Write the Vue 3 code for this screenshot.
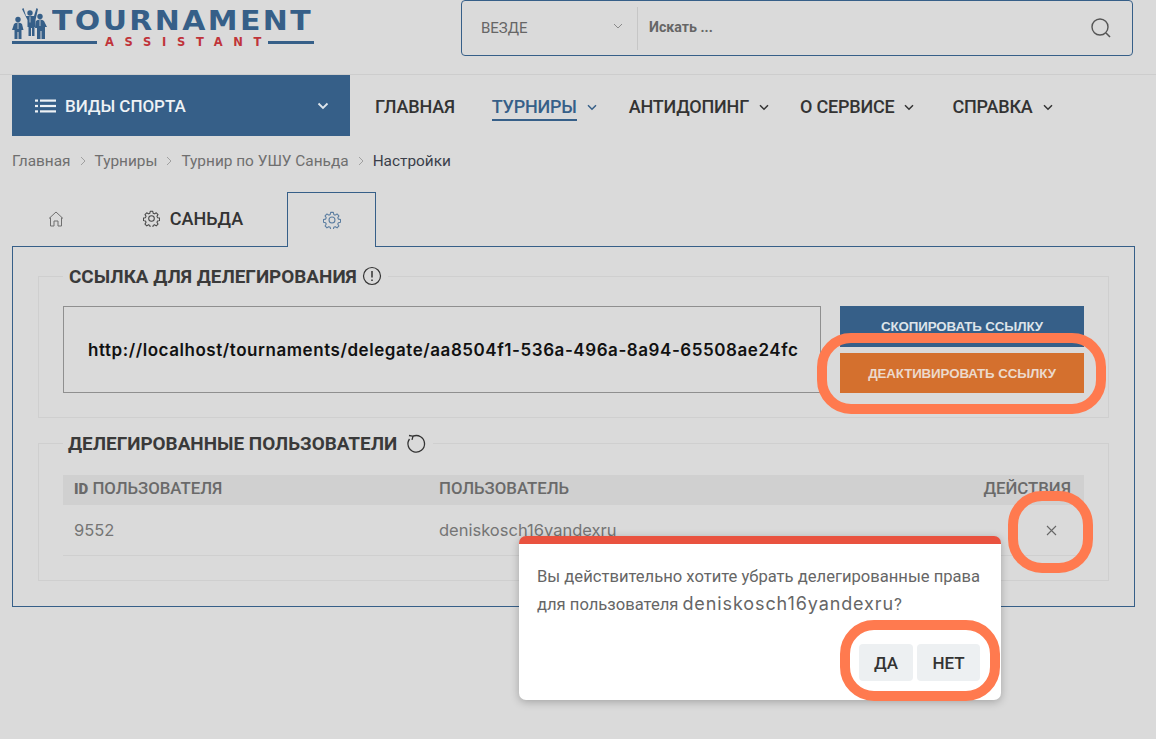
<script setup>
const crumbs = ['Главная', 'Турниры', 'Турнир по УШУ Саньда']
const navItems = [
  { label: 'ГЛАВНАЯ', gap: 37 },
  { label: 'ТУРНИРЫ', caret: true, active: true, gap: 32 },
  { label: 'АНТИДОПИНГ', caret: true, gap: 31 },
  { label: 'О СЕРВИСЕ', caret: true, gap: 38 },
  { label: 'СПРАВКА', caret: true, gap: 0 }
]
const gearPath = 'M10 6.7a3.3 3.3 0 1 0 0 6.6 3.3 3.3 0 0 0 0-6.6zM8.5 1.5h3l.5 2.4 1.5.7 2.1-1.3 2.1 2.1-1.3 2.1.7 1.5 2.4.5v3l-2.4.5-.7 1.5 1.3 2.1-2.1 2.1-2.1-1.3-1.5.7-.5 2.4h-3l-.5-2.4-1.5-.7-2.1 1.3-2.1-2.1 1.3-2.1-.7-1.5-2.4-.5v-3l2.4-.5.7-1.5-1.3-2.1 2.1-2.1 2.1 1.3 1.5-.7z'
</script>

<template>
  <div class="page">
    <header class="header">
      <div class="logo">
        <svg class="logo-icon" viewBox="0 0 36 36" width="36" height="36" aria-hidden="true">
          <g fill="#365f88">
            <circle cx="6" cy="14.500" r="2.700" />
            <circle cx="18" cy="8" r="2.700" />
            <circle cx="28" cy="11.500" r="2.700" />
            <path d="M0 25L2 19Q3 17.500 6 17.500Q9 17.500 10 19L11.500 25H9.500V34H6.500V27H5.500V34H2.500V25Z" />
            <path d="M10 4l1.500-1 2.500 8h8l2.500-8 1.500 1-2.500 11v7h-1v9h-2.500v-8h-1v8h-2.500v-9h-1v-7z" />
            <path d="M23 23L24 16Q25 14.500 28 14.500Q31 14.500 32 16L35 22H33V34H29.500V26H28.500V34H25V23Z" />
          </g>
          <g stroke="#dadada" stroke-width="0.800" fill="none">
            <path d="M6 18v6M18 11.500v6M28 15v6" />
          </g>
        </svg>
        <div class="logo-name">TOURNAMENT</div>
        <div class="logo-sub">
          <span class="logo-line long"></span>
          <span class="logo-assist">ASSISTANT</span>
          <span class="logo-line short"></span>
        </div>
      </div>

      <div class="search">
        <div class="scope">
          <span>ВЕЗДЕ</span>
          <svg class="scope-caret" width="10" height="6" viewBox="0 0 10 6"><path d="M1 1l4 4 4-4" fill="none" stroke="#8a8a8a" stroke-width="1" /></svg>
        </div>
        <div class="query">Искать ...</div>
        <svg class="search-icon" width="22" height="22" viewBox="0 0 22 22"><circle cx="10" cy="10" r="8" fill="none" stroke="#555" stroke-width="1.400" /><path d="M16 16l4 4" stroke="#555" stroke-width="1.600" /></svg>
      </div>
    </header>

    <nav class="nav">
      <div class="sports">
        <svg width="21" height="14" viewBox="0 0 21 14" aria-hidden="true">
          <g fill="#eef2f5"><rect x="0" y="0.500" width="3" height="2.200" /><rect x="5" y="0.500" width="16" height="2.200" /><rect x="0" y="5.900" width="3" height="2.200" /><rect x="5" y="5.900" width="16" height="2.200" /><rect x="0" y="11.300" width="3" height="2.200" /><rect x="5" y="11.300" width="16" height="2.200" /></g>
        </svg>
        <span class="sports-label">ВИДЫ СПОРТА</span>
        <svg class="sports-caret" width="12" height="8" viewBox="0 0 12 8"><path d="M1.500 1.500L6 6l4.500-4.500" fill="none" stroke="#dfe6ec" stroke-width="1.800" /></svg>
      </div>
      <ul class="menu">
        <li v-for="item in navItems" :key="item.label" class="menu-item" :style="{ marginRight: item.gap + 'px' }">
          <span class="menu-label" :class="{ active: item.active }">{{ item.label }}</span>
          <svg v-if="item.caret" class="menu-caret" width="10" height="7" viewBox="0 0 10 7"><path d="M1 1.200l4 4 4-4" fill="none" :stroke="item.active ? '#365f88' : '#333'" stroke-width="1.500" /></svg>
        </li>
      </ul>
    </nav>

    <div class="crumbs">
      <template v-for="c in crumbs" :key="c">
        <span>{{ c }}</span>
        <svg width="6" height="10" viewBox="0 0 6 10"><path d="M1 1l4 4-4 4" fill="none" stroke="#a0a0a0" stroke-width="1" /></svg>
      </template>
      <span class="crumb-current">Настройки</span>
    </div>

    <div class="tabs">
      <div class="tab tab-home">
        <svg width="18" height="18" viewBox="0 0 18 18"><path d="M2 8.500L9 2l7 6.500M3.500 7.500V16h3.500v-5h4v5h3.500V7.500" fill="none" stroke="#6f6f6f" stroke-width="1" stroke-linejoin="round" /></svg>
      </div>
      <div class="tab tab-sanda">
        <svg width="17" height="17" viewBox="0 0 20 20"><path :d="gearPath" fill="none" stroke="#444" stroke-width="1.200" stroke-linejoin="round" /></svg>
        <span>САНЬДА</span>
      </div>
      <div class="tab tab-active">
        <svg width="18" height="18" viewBox="0 0 20 20"><path :d="gearPath" fill="none" stroke="#5b7da0" stroke-width="1.200" stroke-linejoin="round" /></svg>
      </div>
    </div>

    <main class="panel">
      <fieldset class="group group-link">
        <legend>
          <span>ССЫЛКА ДЛЯ ДЕЛЕГИРОВАНИЯ</span>
          <svg width="20" height="20" viewBox="0 0 20 20"><circle cx="10" cy="10" r="8.500" fill="none" stroke="#333" stroke-width="1.200" /><path d="M10 5v6.500M10 13.500v1.500" stroke="#333" stroke-width="1.500" /></svg>
        </legend>
        <div class="link-row">
          <div class="link-box"><span class="link-text">http://localhost/tournaments/delegate/aa8504f1-536a-496a-8a94-65508ae24fc</span></div>
          <div class="link-actions">
            <button class="btn btn-blue">СКОПИРОВАТЬ ССЫЛКУ</button>
            <button class="btn btn-orange">ДЕАКТИВИРОВАТЬ ССЫЛКУ</button>
          </div>
        </div>
      </fieldset>

      <fieldset class="group group-users">
        <legend>
          <span>ДЕЛЕГИРОВАННЫЕ ПОЛЬЗОВАТЕЛИ</span>
          <svg width="21" height="21" viewBox="0 0 21 21"><path d="M7 3.200A8.300 8.300 0 1 1 3.500 6" fill="none" stroke="#333" stroke-width="1.300" /><path d="M3 2.500l4 .7-1 3.600" fill="none" stroke="#333" stroke-width="1.300" /></svg>
        </legend>
        <div class="t-row t-head">
          <span><b class="id">ID</b> ПОЛЬЗОВАТЕЛЯ</span>
          <span>ПОЛЬЗОВАТЕЛЬ</span>
          <span class="t-end">ДЕЙСТВИЯ</span>
        </div>
        <div class="t-row t-body">
          <span>9552</span>
          <span>deniskosch16yandexru</span>
          <span class="t-end">
            <svg class="remove" width="11" height="11" viewBox="0 0 11 11"><path d="M1 1l9 9M10 1l-9 9" stroke="#666" stroke-width="1.100" /></svg>
          </span>
        </div>
      </fieldset>
    </main>

    <section class="dialog">
      <div class="dialog-text">
        <div>Вы действительно хотите убрать делегированные права</div>
        <div class="dialog-line"><span>для пользователя</span><span class="dialog-name">deniskosch16yandexru</span><span>?</span></div>
      </div>
      <div class="dialog-actions">
        <button class="dialog-btn yes">ДА</button>
        <button class="dialog-btn no">НЕТ</button>
      </div>
    </section>

    <div class="mark mark-deactivate"></div>
    <div class="mark mark-remove"></div>
    <div class="mark mark-confirm"></div>
  </div>
</template>

<style>
html, body { margin: 0; background: #dadada; }
</style>

<style scoped>
.page {
  position: relative;
  width: 1156px;
  height: 739px;
  overflow: hidden;
  background: #dadada;
  color: #333;
  font-family: Roboto, "Liberation Sans", sans-serif;
}
.header {
  display: flex;
  justify-content: space-between;
  box-sizing: border-box;
  height: 75px;
  padding: 0 23px 0 12px;
  border-bottom: 1px solid #cdcdcd;
}
.logo { position: relative; width: 302px; height: 50px; }
.logo-icon { position: absolute; left: 0; top: 5px; }
.logo-name {
  position: absolute;
  left: 40px;
  top: 6px;
  font: 700 26px/30px "DejaVu Sans", sans-serif;
  letter-spacing: 2.100px;
  color: #365f88;
  white-space: nowrap;
  transform: scaleX(1.15);
  transform-origin: left center;
}
.logo-sub {
  position: absolute;
  left: 0;
  top: 35px;
  width: 302px;
  display: flex;
  align-items: center;
}
.logo-line { height: 3px; background: #365f88; }
.logo-line.long { width: 85px; }
.logo-line.short { width: 46px; margin-left: auto; }
.logo-assist {
  padding-left: 8px;
  font: 700 11.500px/14px "DejaVu Sans", sans-serif;
  letter-spacing: 10.700px;
  color: #c0343a;
  white-space: nowrap;
  margin-right: -11px;
}
.search {
  display: flex;
  align-items: center;
  box-sizing: border-box;
  width: 672px;
  height: 56px;
  border: 1px solid #365f88;
  border-radius: 4px;
}
.scope {
  display: flex;
  align-items: center;
  justify-content: space-between;
  box-sizing: border-box;
  width: 176px;
  height: 43px;
  padding: 0 14px 0 19px;
  border-right: 1px solid #c6c6c6;
  font-size: 15px;
  color: #666;
}
.scope-caret { margin-bottom: 5px; }
.query { flex: 1; padding-left: 11px; font-size: 14.200px; font-weight: 700; color: #666; margin-bottom: 2px; }
.search-icon { margin-right: 20px; }
.nav { display: flex; align-items: stretch; height: 61px; padding-left: 12px; }
.sports {
  display: flex;
  align-items: center;
  box-sizing: border-box;
  width: 338px;
  padding: 0 21px 0 23px;
  background: #365f88;
  color: #eef2f5;
}
.sports-label { flex: 1; margin-left: 9px; font-size: 17px; font-weight: 500; letter-spacing: -0.050px; }
.menu { display: flex; align-items: center; margin: 0; padding: 0 0 0 25px; list-style: none; }
.menu-item { display: flex; align-items: center; gap: 10px; font-size: 18px; font-weight: 500; white-space: nowrap; letter-spacing: -0.200px; }
.menu-label { padding: 5px 0 2px; border-bottom: 2px solid transparent; }
.menu-label.active { color: #365f88; border-bottom-color: #365f88; }
.menu-caret { margin-top: 3px; }
.crumbs {
  display: flex;
  align-items: center;
  gap: 9px;
  height: 49px;
  padding-left: 12px;
  font-size: 15.400px;
  color: #6f6f6f;
}
.crumb-current { color: #3b3f4a; }
.tabs { display: flex; align-items: stretch; height: 54px; margin-top: 7px; padding-left: 12px; box-sizing: border-box; }
.tab { display: flex; align-items: center; justify-content: center; box-sizing: border-box; }
.tab-home { width: 87px; }
.tab-sanda { width: 188px; gap: 10px; padding-bottom: 2px; font-size: 18px; font-weight: 500; color: #333; }
.tab-active {
  position: relative;
  z-index: 1;
  width: 89px;
  border: 1px solid #365f88;
  border-bottom: 0;
  background: #dadada;
  margin-bottom: -1px;
  height: 55px;
}
.panel {
  box-sizing: border-box;
  width: 1123px;
  height: 361px;
  margin-left: 12px;
  padding: 17px 25px 0;
  border: 1px solid #365f88;
}
.group { margin: 0; padding: 0 24px; border: 1px solid #cfcfcf; min-width: 0; }
.group legend {
  display: flex;
  align-items: center;
  gap: 5px;
  height: 24px;
  padding: 0 6px;
  font-size: 18.900px;
  font-weight: 700;
  color: #3a3a3a;
  letter-spacing: 0;
}
.group-link { padding-top: 18px; padding-bottom: 24px; height: 154px; box-sizing: border-box; }
.group-users { margin-top: 13px; padding-top: 20px; height: 150px; box-sizing: border-box; }
.group-users legend { gap: 9px; padding-left: 5px; }
.link-row { display: flex; justify-content: space-between; align-items: flex-start; }
.link-box {
  display: flex;
  align-items: center;
  box-sizing: border-box;
  width: 758px;
  height: 87px;
  padding: 0 18px 0 24px;
  border: 1px solid #8f8f8f;
}
.link-text {
  font-family: Inter, sans-serif;
  font-weight: 600;
  font-size: 17px;
  letter-spacing: 0.550px;
  color: #111;
  white-space: nowrap;
}
.link-actions { display: flex; flex-direction: column; gap: 6px; width: 244px; }
.btn {
  border: 0;
  padding: 0;
  height: 41px;
  color: #dde4ea;
  font: 700 13.300px "Liberation Sans", sans-serif;
  letter-spacing: -0.100px;
}
.btn-blue { background: #365f88; }
.btn-orange { background: #d4702e; color: #ecd9cc; height: 40px; }
.t-row {
  display: grid;
  grid-template-columns: 365px 1fr auto;
  align-items: center;
  padding: 0 13px 0 11px;
}
.t-head { box-sizing: border-box; height: 30px; padding-bottom: 4px; background: #d0d0d0; font-size: 16.800px; font-weight: 500; color: #6a6a6a; }
.id { font-weight: 900; font-size: 15px; }
.t-body { height: 51px; border-bottom: 1px solid #cfcfcf; font-size: 16.500px; color: #757575; font-family: Inter, sans-serif; box-sizing: border-box; }
.t-end { justify-self: end; }
.remove { display: block; margin-right: 14px; }
.dialog {
  position: absolute;
  left: 519px;
  top: 536px;
  box-sizing: border-box;
  width: 482px;
  height: 164px;
  padding: 19px 18px 0;
  background: #fff;
  border-top: 8px solid #e9523f;
  border-radius: 7px;
  box-shadow: 0 2px 8px rgba(0, 0, 0, 0.25);
}
.dialog-text { width: 450px; font-size: 16.600px; line-height: 27px; color: #666; white-space: nowrap; }
.dialog-line { display: flex; align-items: baseline; }
.dialog-name { margin-left: 4px; font-family: Inter, sans-serif; font-size: 18px; letter-spacing: 0.900px; }
.dialog-actions { position: absolute; right: 21px; bottom: 19px; display: flex; gap: 4px; }
.dialog-btn {
  height: 37px;
  padding: 0;
  border: 0;
  border-radius: 4px;
  background: #edf0f2;
  color: #333;
  font: 500 17px Roboto, sans-serif;
}
.yes { width: 54px; }
.no { width: 63px; }
.mark {
  position: absolute;
  box-sizing: border-box;
  border: 10px solid #ff7a4f;
  border-radius: 34px;
}
.mark-deactivate { left: 817px; top: 333px; width: 289px; height: 81px; }
.mark-remove { left: 1008px; top: 491px; width: 85px; height: 82px; }
.mark-confirm { left: 840px; top: 620px; width: 160px; height: 81px; }
</style>
